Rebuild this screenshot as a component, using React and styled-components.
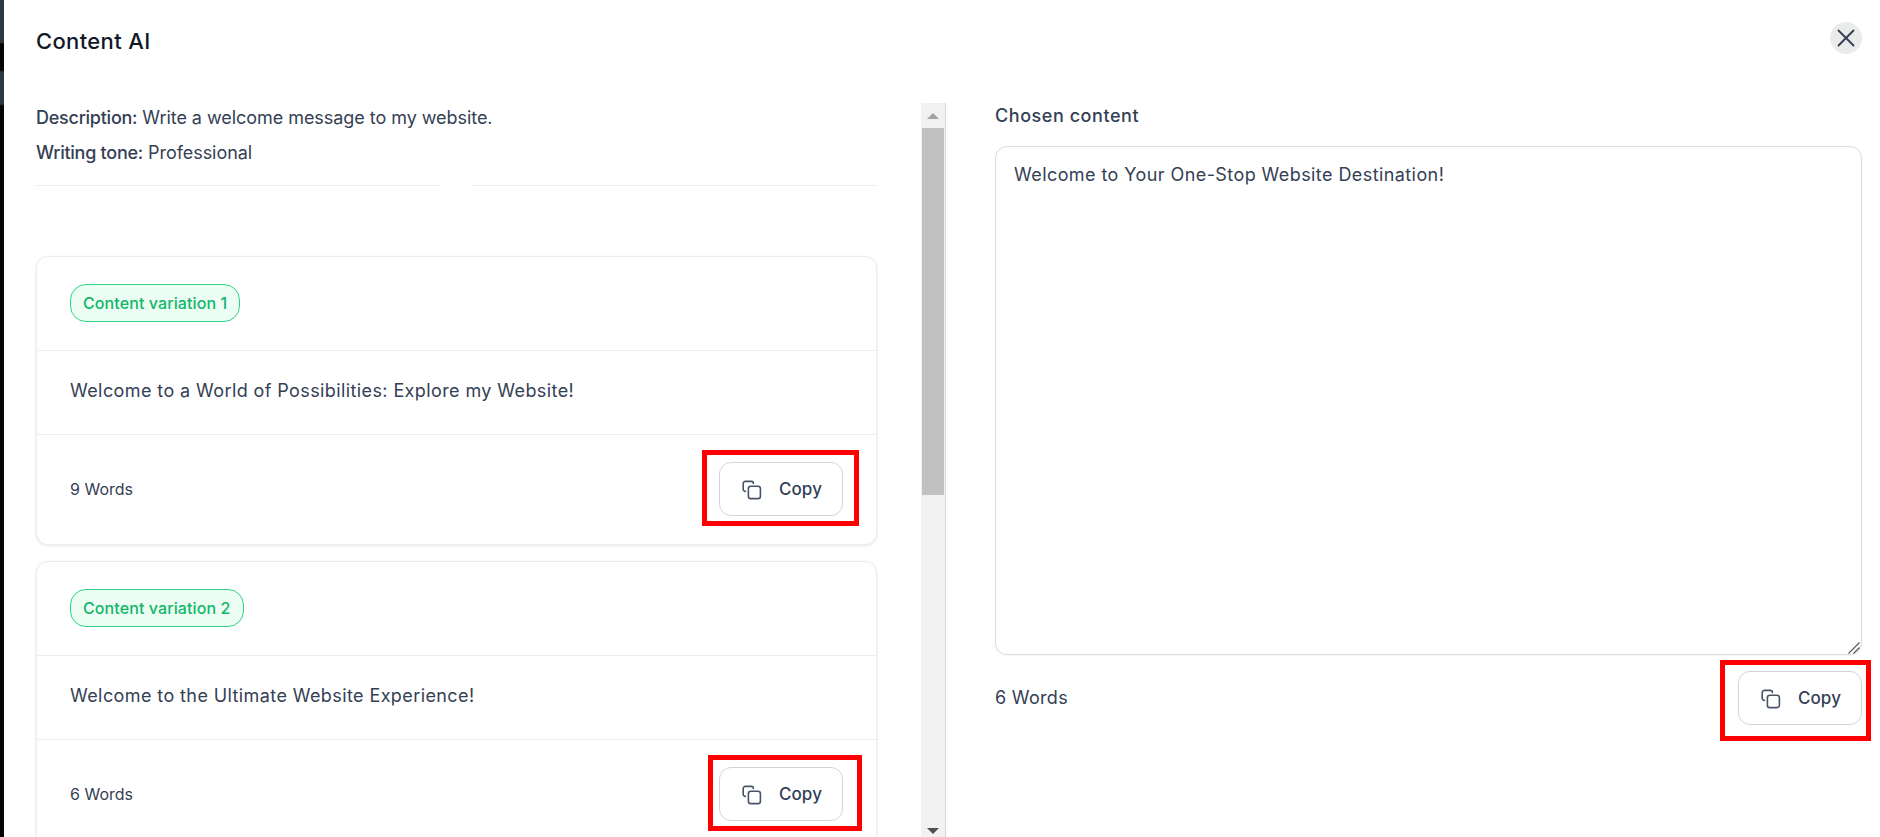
import React from "react";
import styled, { createGlobalStyle } from "styled-components";
import { X } from "lucide-react";

const GlobalStyle = createGlobalStyle`
  html, body {
    margin: 0;
    height: 100%;
    overflow: hidden;
    background: #fff;
  }
  * {
    box-sizing: border-box;
  }
`;

const Page = styled.div`
  display: flex;
  width: 1880px;
  height: 837px;
  overflow: hidden;
  font-family: Inter, "Liberation Sans", sans-serif;
  color: #344054;
  background: #000;
`;

const Backdrop = styled.div`
  width: 4px;
  flex: none;
  background: linear-gradient(
    #2d3742 0,
    #2d3742 42px,
    #050505 44px,
    #050505 70px,
    #2d3742 72px,
    #2d3742 104px,
    #050505 106px
  );
`;

const Modal = styled.div`
  flex: 1;
  min-width: 0;
  display: flex;
  flex-direction: column;
  background: #fff;
`;

const Header = styled.header`
  height: 103px;
  flex: none;
  display: flex;
  justify-content: space-between;
  align-items: flex-start;
  padding: 22px 18px 0 32px;
`;

const Title = styled.h2`
  margin: 5px 0 0;
  font-size: 22px;
  line-height: 28px;
  font-weight: 500;
  letter-spacing: 0.35px;
  color: #101828;
`;

const CloseButton = styled.button`
  width: 32px;
  height: 32px;
  padding: 0;
  border: 0;
  border-radius: 50%;
  display: flex;
  align-items: center;
  justify-content: center;
  background: #eaecec;
  color: #344054;
`;

const Body = styled.div`
  flex: 1;
  min-height: 0;
  display: flex;
`;

const LeftPane = styled.div`
  width: 917px;
  flex: none;
  overflow: hidden;
  padding: 0 44px 0 32px;
`;

const MetaBlock = styled.div`
  display: flex;
  flex-direction: column;
  gap: 11px;
  padding-top: 3px;
`;

const Meta = styled.p`
  margin: 0;
  font-size: 18px;
  line-height: 24px;
  font-weight: 400;
  letter-spacing: -0.05px;

  b {
    font-weight: 500;
    letter-spacing: -0.25px;
  }
`;

const Dividers = styled.div`
  display: flex;
  gap: 32px;
  margin: 20px 0 70px;
`;

const Divider = styled.div`
  flex: 1;
  height: 1px;
  background: #eaecf0;
`;

const Card = styled.section`
  border: 1px solid #eaecf0;
  border-radius: 12px;
  background: #fff;
  box-shadow: 0 1px 3px rgba(16, 24, 40, 0.1);
  margin-bottom: 16px;
`;

const CardHead = styled.div`
  height: 94px;
  display: flex;
  align-items: center;
  padding: 0 33px 2px;
  border-bottom: 1px solid #eaecf0;
`;

const Badge = styled.span`
  display: inline-flex;
  align-items: center;
  height: 38px;
  padding: 0 12px;
  border: 1px solid #32d583;
  border-radius: 16px;
  background: #ecfdf3;
  color: #12b76a;
  font-size: 16px;
  font-weight: 500;
  letter-spacing: 0.1px;
`;

const CardText = styled.div`
  height: 84px;
  display: flex;
  align-items: center;
  padding: 0 33px 4px;
  border-bottom: 1px solid #eaecf0;
  font-size: 18px;
  letter-spacing: 0.4px;
`;

const CardFoot = styled.div`
  height: 109px;
  display: flex;
  align-items: center;
  justify-content: space-between;
  padding: 0 33px 2px;
  font-size: 16px;
`;

const ScrollBar = styled.div`
  width: 25px;
  flex: none;
  display: flex;
  flex-direction: column;
  background: #f1f1f1;
  border-right: 1px solid #d5d9df;
`;

const ScrollArrow = styled.div`
  height: ${(p) => (p.$down ? 12 : 25)}px;
  flex: none;
  display: flex;
  align-items: center;
  justify-content: center;

  &::before {
    content: "";
    border-left: 6px solid transparent;
    border-right: 6px solid transparent;
    ${(p) =>
      p.$down
        ? "border-top: 6px solid #505050;"
        : "border-bottom: 6px solid #a3a3a3;"}
  }
`;

const ScrollTrack = styled.div`
  flex: 1;
  padding: 0 1px;
`;

const ScrollThumb = styled.div`
  height: 367px;
  background: #c1c1c1;
`;

const RightPane = styled.div`
  flex: 1;
  min-width: 0;
  padding: 1px 18px 0 49px;
`;

const Label = styled.label`
  display: block;
  font-size: 18px;
  line-height: 24px;
  font-weight: 500;
  letter-spacing: 0.55px;
  margin-bottom: 18px;
`;

const EditorBox = styled.div`
  position: relative;
`;

const Editor = styled.textarea`
  display: block;
  width: 100%;
  height: 509px;
  padding: 14px 18px;
  border: 1px solid #d9dde3;
  border-radius: 12px;
  outline: none;
  resize: none;
  box-shadow: 0 1px 2px rgba(16, 24, 40, 0.05);
  color: #344054;
  font-family: inherit;
  font-size: 18px;
  line-height: 28px;
  letter-spacing: 0.42px;
`;

const ResizeGrip = styled.svg`
  position: absolute;
  right: 2px;
  bottom: 1px;
  width: 12px;
  height: 12px;
`;

const EditorFoot = styled.div`
  display: flex;
  align-items: center;
  justify-content: space-between;
  margin-top: 16px;
  font-size: 18px;
  letter-spacing: 0.3px;
`;

const WordCount = styled.span`
  margin-top: -2px;
`;

const CopyWrap = styled.div`
  position: relative;
  flex: none;
`;

const CopyButton = styled.button`
  width: 124px;
  height: 54px;
  display: flex;
  align-items: center;
  justify-content: center;
  gap: 17px;
  padding: 0 0 0 2px;
  border: 1px solid #d0d5dd;
  border-radius: 12px;
  background: #fff;
  color: #344054;
  font-family: inherit;
  font-size: 17px;
  font-weight: 500;
  letter-spacing: 0.1px;

  svg {
    color: #475467;
    margin-top: 2px;
  }
`;

// red annotation boxes drawn on top of the screenshot
const Marker = styled.div`
  position: absolute;
  top: ${(p) => p.$top}px;
  left: ${(p) => p.$left}px;
  width: ${(p) => p.$w}px;
  height: ${(p) => p.$h}px;
  border: 5px solid #ff0000;
  pointer-events: none;
`;

const CopyIcon = () => (
  <svg width="20" height="20" viewBox="0 0 20 20" fill="none" stroke="currentColor" strokeWidth="1.6" strokeLinecap="round" strokeLinejoin="round">
    <path d="M3.4 11.4A2.2 2.2 0 0 1 1.2 9.2V3.6A2.2 2.2 0 0 1 3.4 1.4H9.4A2 2 0 0 1 11.4 3.4" />
    <rect x="6.4" y="6.2" width="12" height="12.4" rx="2.4" />
  </svg>
);

const Copy = ({ mark }) => (
  <CopyWrap>
    <CopyButton>
      <CopyIcon />
      Copy
    </CopyButton>
    <Marker $top={mark.top} $left={mark.left} $w={mark.w} $h={mark.h} />
  </CopyWrap>
);

const variations = [
  {
    id: 1,
    text: "Welcome to a World of Possibilities: Explore my Website!",
    words: "9 Words",
    mark: { top: -12, left: -17, w: 157, h: 76 },
  },
  {
    id: 2,
    text: "Welcome to the Ultimate Website Experience!",
    words: "6 Words",
    mark: { top: -12, left: -11, w: 154, h: 76 },
  },
];

export default function App() {
  return (
    <Page>
      <GlobalStyle />
      <Backdrop />
      <Modal>
        <Header>
          <Title>Content AI</Title>
          <CloseButton>
            <X size={30} strokeWidth={1.5} />
          </CloseButton>
        </Header>
        <Body>
          <LeftPane>
            <MetaBlock>
              <Meta>
                <b>Description:</b> Write a welcome message to my website.
              </Meta>
              <Meta>
                <b>Writing tone:</b> Professional
              </Meta>
            </MetaBlock>
            <Dividers>
              <Divider />
              <Divider />
            </Dividers>
            {variations.map((v) => (
              <Card key={v.id}>
                <CardHead>
                  <Badge>Content variation {v.id}</Badge>
                </CardHead>
                <CardText>{v.text}</CardText>
                <CardFoot>
                  {v.words}
                  <Copy mark={v.mark} />
                </CardFoot>
              </Card>
            ))}
          </LeftPane>
          <ScrollBar>
            <ScrollArrow />
            <ScrollTrack>
              <ScrollThumb />
            </ScrollTrack>
            <ScrollArrow $down />
          </ScrollBar>
          <RightPane>
            <Label>Chosen content</Label>
            <EditorBox>
              <Editor readOnly defaultValue="Welcome to Your One-Stop Website Destination!" />
              <ResizeGrip viewBox="0 0 12 12" fill="none" stroke="#555" strokeWidth="1.1">
                <path d="M0.5 11.5L11.5 0.5" />
                <path d="M5.5 11.5L11.5 5.5" />
              </ResizeGrip>
            </EditorBox>
            <EditorFoot>
              <WordCount>6 Words</WordCount>
              <Copy mark={{ top: -11, left: -18, w: 151, h: 81 }} />
            </EditorFoot>
          </RightPane>
        </Body>
      </Modal>
    </Page>
  );
}
